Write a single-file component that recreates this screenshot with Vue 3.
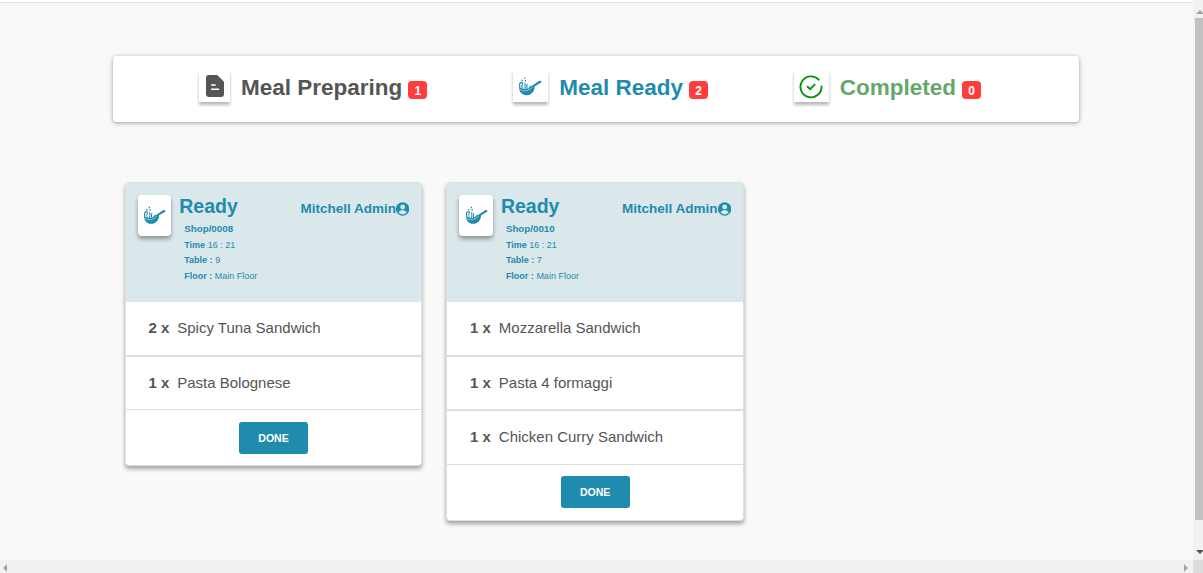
<script setup>
const tabs = [
  { label: 'Meal Preparing', count: 1, kind: 'preparing' },
  { label: 'Meal Ready', count: 2, kind: 'ready' },
  { label: 'Completed', count: 0, kind: 'completed' },
]
const orders = [
  {
    ref: 'Shop/0008', time: '16 : 21', table: 9, floor: 'Main Floor', user: 'Mitchell Admin',
    lines: [{ qty: 2, name: 'Spicy Tuna Sandwich' }, { qty: 1, name: 'Pasta Bolognese' }],
  },
  {
    ref: 'Shop/0010', time: '16 : 21', table: 7, floor: 'Main Floor', user: 'Mitchell Admin',
    lines: [
      { qty: 1, name: 'Mozzarella Sandwich' },
      { qty: 1, name: 'Pasta 4 formaggi' },
      { qty: 1, name: 'Chicken Curry Sandwich' },
    ],
  },
]
</script>

<template>
  <div class="screen">
    <svg class="defs" width="0" height="0">
      <symbol id="pan" viewBox="0 0 24 20">
        <path fill="currentColor" d="M1 9.200C3 13 11 13 14 8.800L21 4.100C22 3.400 23.200 3.700 23.400 4.600c.1.8-.4 1.200-1.100 1.500L16.600 9.400c.2 5-3.400 8.800-8.200 8.800C4 18.200.8 14.500 1 9.200z" />
        <path fill="none" stroke="#fff" stroke-width=".5" d="M1.800 12.200c3 2.500 9 2.300 12.500-2.200" />
        <path fill="none" stroke="currentColor" stroke-width="1.100" d="M2 10.500C1.200 8 1.400 6.500 2.600 5.400M2.600 5.400L4.600 6M4.300 12C3.500 9 4 7 4.800 5.400M6.700 12C8 9 6.400 8 7.200 6M9.200 12C8 9.500 9.500 8.600 9 7M11 11l2.200-2.200" />
        <path fill="currentColor" d="M3.300 2.800h1.400v1.400H3.300zM5.900.4h1.400v1.400H5.900zM6.800 3h1.300v1.400H6.800z" />
      </symbol>
    </svg>

    <main class="page">
      <header class="tabs">
        <div v-for="tab in tabs" :key="tab.kind" class="tab" :class="tab.kind">
          <span class="tile">
            <svg v-if="tab.kind === 'preparing'" width="18" height="22" viewBox="0 0 18 22">
              <path fill="#555" d="M3 0h8.200L18 6.800V19a3 3 0 0 1-3 3H3a3 3 0 0 1-3-3V3a3 3 0 0 1 3-3z" />
              <path stroke="#fff" stroke-width="1.600" stroke-linecap="round" d="M5.700 10h3.500M5.700 14.300h6.800" />
            </svg>
            <svg v-else-if="tab.kind === 'ready'" class="pan" width="24" height="20"><use href="#pan" /></svg>
            <svg v-else class="check" width="24" height="24" viewBox="0 0 24 24" fill="none" stroke="#0a930f" stroke-width="1.900" stroke-linecap="round" stroke-linejoin="round">
              <path d="M19.700 4.700A10.500 10.500 0 1 0 22.500 11.500" />
              <path d="M8.600 11.700l2.600 2.500 4.400-4.500" />
            </svg>
          </span>
          <span class="label">{{ tab.label }}</span>
          <span class="badge">{{ tab.count }}</span>
        </div>
      </header>

      <section class="orders">
        <article v-for="order in orders" :key="order.ref" class="card">
          <div class="head">
            <span class="thumb"><svg width="23" height="20"><use href="#pan" /></svg></span>
            <div class="info">
              <h2>Ready</h2>
              <p class="ref">{{ order.ref }}</p>
              <p><b>Time</b> {{ order.time }}</p>
              <p><b>Table :</b> {{ order.table }}</p>
              <p><b>Floor :</b> {{ order.floor }}</p>
            </div>
            <div class="user">
              <span>{{ order.user }}</span>
              <svg width="13.300" height="14" viewBox="0 0 13 14">
                <circle cx="6.500" cy="7" r="6.700" fill="#1f8bad" />
                <circle cx="6.500" cy="5" r="2.400" fill="#dae7eb" />
                <path d="M2.400 10.600C3.200 8.700 4.700 8.300 6.500 8.300s3.300.4 4.100 2.300C8.500 13 4.500 13 2.400 10.600z" fill="#dae7eb" />
              </svg>
            </div>
          </div>
          <div v-for="line in order.lines" :key="line.name" class="line">
            <b>{{ line.qty }} x</b><span>{{ line.name }}</span>
          </div>
          <div class="foot"><button type="button">DONE</button></div>
        </article>
      </section>
    </main>

    <div class="vbar">
      <svg class="up" width="8" height="4" viewBox="0 0 8 4"><path d="M1 4L5 0l4 4z" fill="#a3a3a3" /></svg>
      <div class="grip"></div>
      <svg class="down" width="8" height="4" viewBox="0 0 8 4"><path d="M1 0h8L5 4z" fill="#505050" /></svg>
    </div>
    <div class="hbar">
      <svg width="4" height="8" viewBox="0 0 4 8"><path d="M4 0v8L0 4z" fill="#a3a3a3" /></svg>
      <svg width="4" height="8" viewBox="0 0 4 8"><path d="M0 0v8l4-4z" fill="#a3a3a3" /></svg>
    </div>
    <div class="corner"></div>
  </div>
</template>

<style>
body { margin: 0; overflow: hidden; }
</style>

<style scoped>
* { box-sizing: border-box; }
.screen {
  width: 1203px; height: 573px;
  display: grid; grid-template: 560px 13px / 1193px 10px;
  background: #f9f9f9; overflow: hidden;
  font-family: "Liberation Sans", Arial, sans-serif; color: #555;
  box-shadow: inset 0 2px #fff, inset 0 3px #e2e2e2;
}
.defs { position: absolute; }
.page { padding: 56px 0 0 113px; }
.tabs {
  width: 966px; height: 66px; padding: 14px 0 0 86px;
  display: flex; gap: 86px; background: #fff; border-radius: 4px;
  box-shadow: 0 1px 4px rgba(0, 0, 0, .38);
}
.tab { display: flex; align-items: flex-start; }
.tile {
  width: 31px; height: 32px; margin-right: 11px; padding-top: 5px;
  display: flex; justify-content: center; align-items: flex-start;
  box-shadow: 0 3px 3px rgba(0, 0, 0, .28);
}
.ready .tile, .completed .tile { width: 35px; }
.completed .tile { margin-right: 10.700px; }
.pan { margin: 2px 1px 0 0; }
.check { margin-right: 1px; }
.ready { color: #1f8bad; }
.completed { color: #65a76b; }
.label { font-size: 22.500px; font-weight: 700; line-height: 36px; white-space: nowrap; }
.badge {
  width: 19px; height: 18px; margin: 11px 0 0 6px; border-radius: 4px;
  background: #ff3d3d; color: #fff; font-size: 12px; font-weight: 700;
  line-height: 20px; text-align: center;
}
.orders { display: flex; align-items: flex-start; gap: 24px; padding: 60px 0 0 11.700px; }
.card {
  width: 297.600px; border: 1px solid #dedede; border-radius: 4px; background: #fff;
  box-shadow: 0 3px 4px rgba(0, 0, 0, .34); overflow: hidden;
}
.head {
  height: 118.800px; display: flex; align-items: flex-start;
  padding: 12px 12px 0 12px; background: #dae7eb; color: #1f8bad;
}
.thumb {
  width: 33.600px; height: 41px; border-radius: 4px; background: #fff;
  display: flex; align-items: center; justify-content: center;
  box-shadow: 0 3px 4px rgba(0, 0, 0, .36);
}
.info { flex: 1; padding-left: 8px; }
h2 { margin: 0 0 3px; font-size: 19.500px; line-height: 23px; }
p { margin: 0 0 0 5px; font-size: 9px; line-height: 15.500px; white-space: nowrap; }
.ref { font-size: 9.750px; font-weight: 700; line-height: 16.600px; }
.user { display: flex; align-items: center; font-size: 13.500px; font-weight: 700; line-height: 27px; white-space: nowrap; }
.line {
  height: 54.250px; padding: 0 0 1px 22.700px; display: flex; align-items: center; gap: 8px;
  font-size: 15px; border-bottom: 1px solid #dedede;
}
.line + .line { border-top: 1px solid #dedede; }
.foot { height: 55.100px; padding-top: 11.700px; display: flex; justify-content: center; align-items: flex-start; }
button {
  width: 69px; height: 32px; padding: 0; border: 0; border-radius: 3px;
  background: #1f8bad; color: #fff; font: 700 10.500px/32px "Liberation Sans", Arial, sans-serif;
}
.vbar { padding: 10px 0 0 2px; background: #f1f1f1; display: flex; flex-direction: column; }
.up { margin-bottom: 4px; }
.grip { height: 502px; background: #c1c1c1; }
.down { margin-top: 30px; }
.hbar { background: #f1f1f1; display: flex; justify-content: space-between; align-items: center; padding: 2px 5px 0 3px; }
.corner { background: #dcdcdc; }
</style>
